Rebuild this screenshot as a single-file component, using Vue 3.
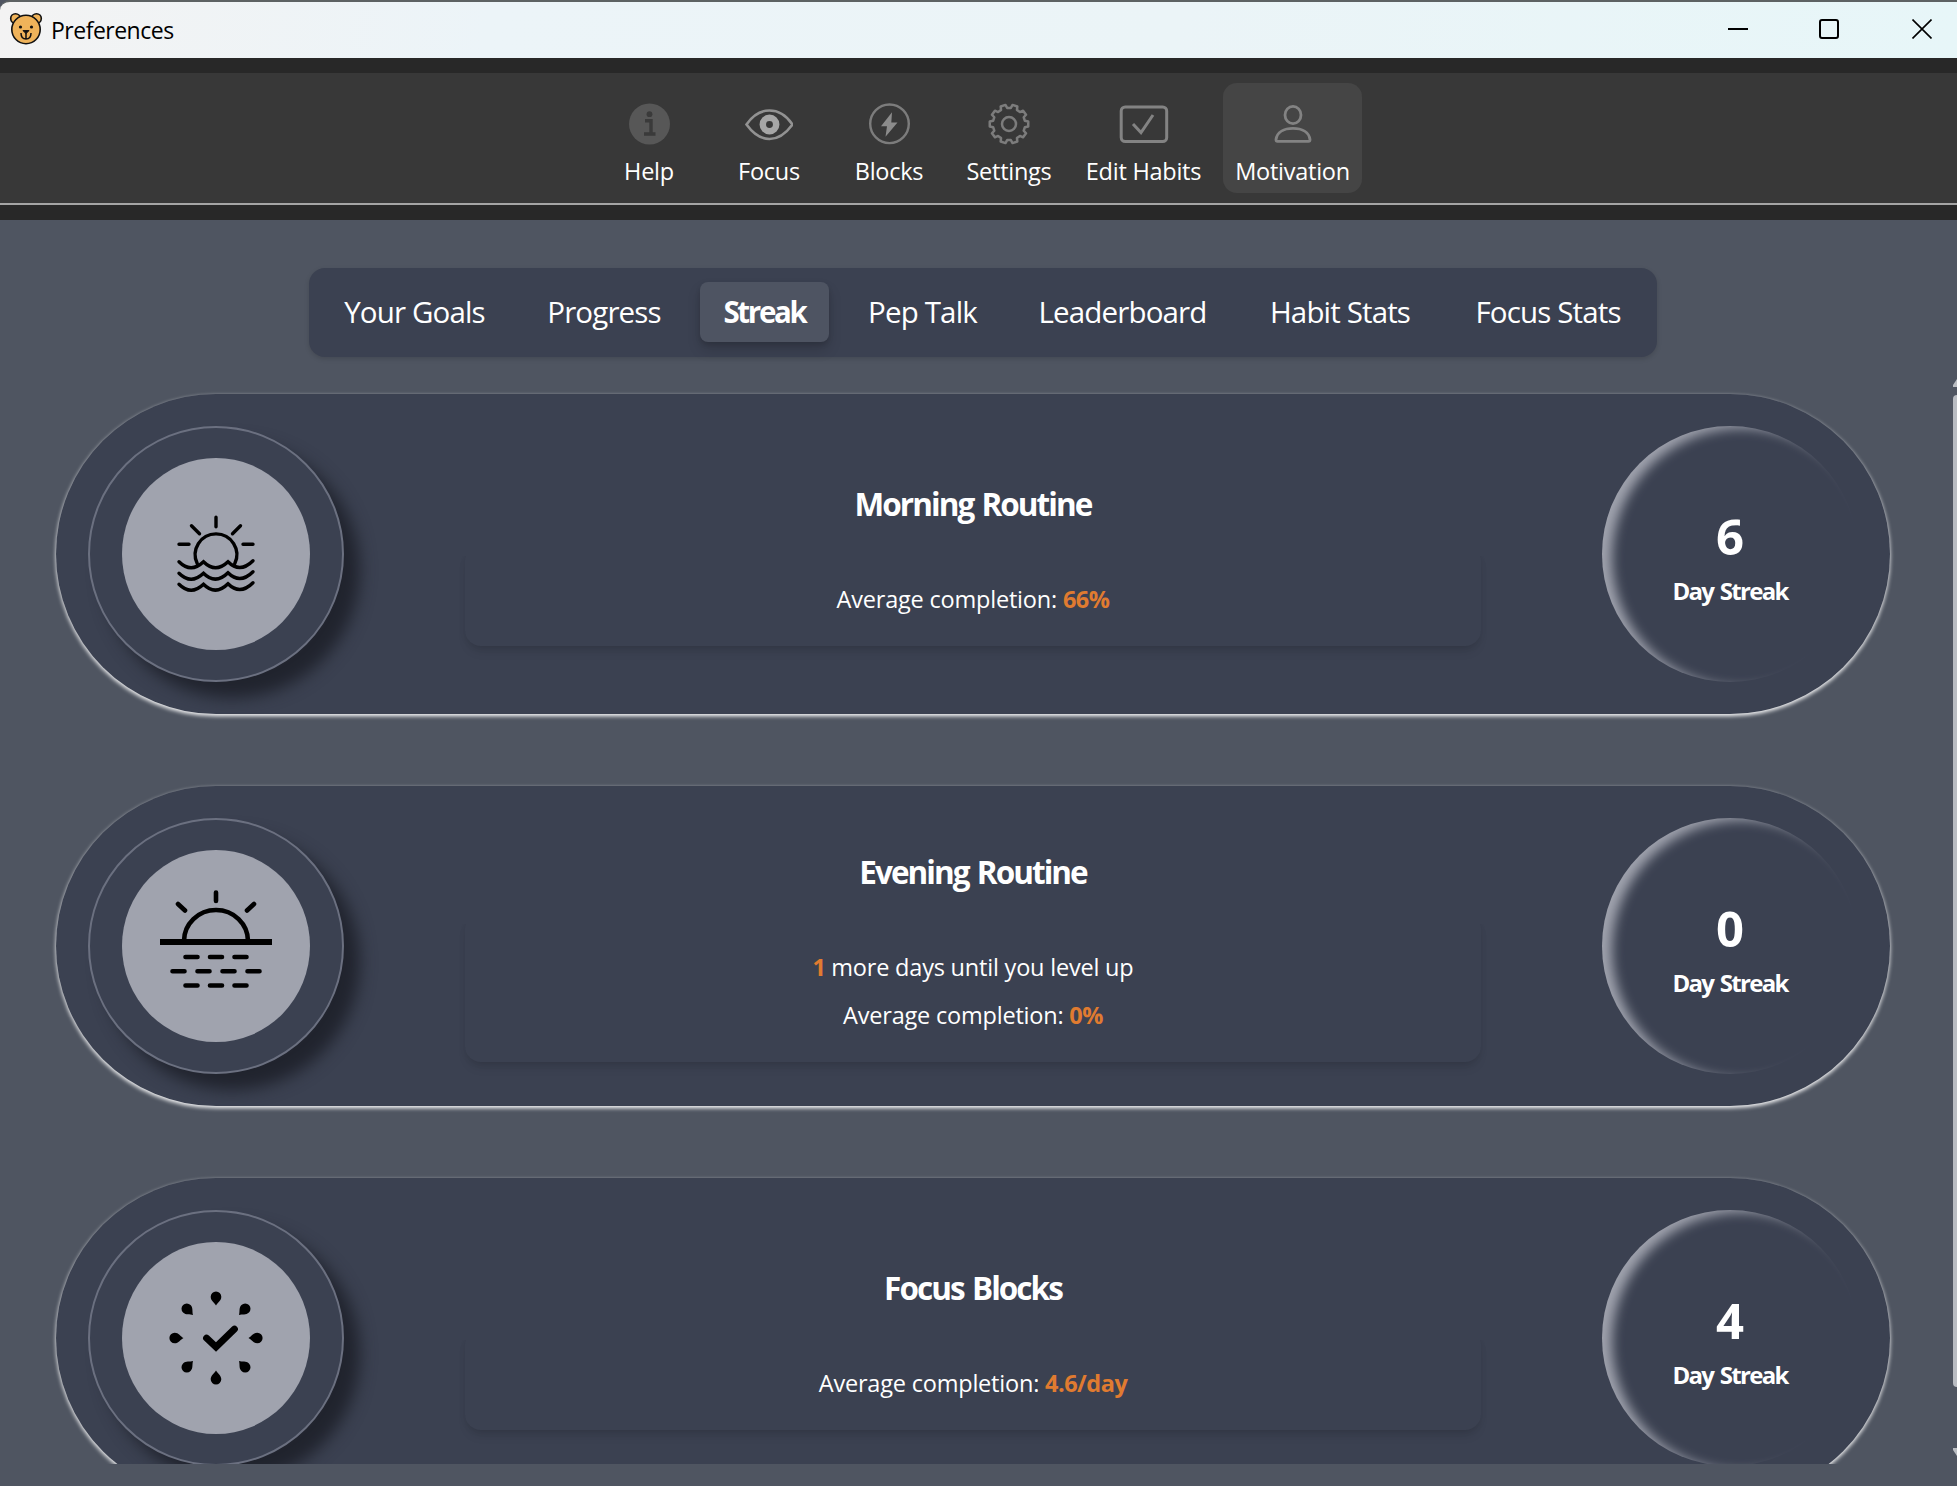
<script setup>
const tools = [
  { id: 'help', label: 'Help' },
  { id: 'focus', label: 'Focus' },
  { id: 'blocks', label: 'Blocks' },
  { id: 'settings', label: 'Settings' },
  { id: 'edit', label: 'Edit Habits', wide: true },
  { id: 'motivation', label: 'Motivation', wide: true, active: true },
]

const tabs = [
  { label: 'Your Goals', width: 187 },
  { label: 'Progress', width: 160 },
  { label: 'Streak', width: 129, active: true },
  { label: 'Pep Talk', width: 155 },
  { label: 'Leaderboard', width: 213 },
  { label: 'Habit Stats', width: 190 },
  { label: 'Focus Stats', width: 194 },
]

const streaks = [
  { id: 'morning', title: 'Morning Routine', average: '66%', days: 6 },
  { id: 'evening', title: 'Evening Routine', levelUp: 1, average: '0%', days: 0 },
  { id: 'blocks', title: 'Focus Blocks', average: '4.6/day', days: 4 },
]

const petals = [0, 45, 90, 135, 180, 225, 270, 315]

// Outline of the settings cog: alternating tooth tips and valleys.
const cog = (() => {
  const pts = []
  const teeth = 10
  for (let i = 0; i < teeth; i++) {
    const a = (i / teeth) * Math.PI * 2 - Math.PI / 2 + Math.PI / teeth
    for (const [off, r] of [[-0.2, 16.2], [-0.13, 19.4], [0.13, 19.4], [0.2, 16.2]]) {
      pts.push(`${(22 + r * Math.cos(a + off)).toFixed(2)} ${(22 + r * Math.sin(a + off)).toFixed(2)}`)
    }
  }
  return `M${pts.join('L')}Z`
})()
</script>

<template>
  <div class="window">
    <div class="titlebar">
      <svg class="bear" width="34" height="34" viewBox="0 0 34 34">
        <g fill="#efb35a" stroke="#111" stroke-width="1.6">
          <circle cx="6.5" cy="6.5" r="4.8" />
          <circle cx="27.5" cy="6.5" r="4.8" />
          <circle cx="17" cy="17.5" r="14.2" />
        </g>
        <circle cx="11.5" cy="15" r="1.6" fill="#111" />
        <circle cx="22.5" cy="15" r="1.6" fill="#111" />
        <path d="M14 18.6h6l-3 3z" fill="#111" stroke="#111" />
        <path d="M17 21v6M12 21c0 4 1.500 6 5 6s5-2 5-6" fill="none" stroke="#111" stroke-width="1.5" />
      </svg>
      <span class="caption">Preferences</span>
      <div class="controls">
        <svg width="20" height="20" viewBox="0 0 20 20"><path d="M0 10h20" /></svg>
        <svg width="20" height="20" viewBox="0 0 20 20"><rect x="1" y="1" width="18" height="18" rx="2" /></svg>
        <svg width="20" height="20" viewBox="0 0 20 20"><path d="M.5 .5l19 19M19.500 .5l-19 19" class="thin" /></svg>
      </div>
    </div>

    <nav class="toolbar">
      <div v-for="t in tools" :key="t.id" class="tool" :class="{ wide: t.wide, active: t.active }">
        <svg v-if="t.id === 'help'" width="48" height="44" viewBox="-2 0 48 44">
          <circle cx="22.500" cy="22" r="20.500" fill="#575757" />
          <circle cx="22.500" cy="12.200" r="2.900" fill="#3a3a3a" />
          <path d="M18 18.800h6v12.500M17 32h11.500" fill="none" stroke="#3a3a3a" stroke-width="3.400" />
        </svg>
        <svg v-else-if="t.id === 'focus'" width="48" height="44" viewBox="0 0 48 44">
          <path d="M1.500 22.500Q11 8.500 24.500 8.500T47.500 22.500Q37 37 24.500 37T1.500 22.500Z" fill="none" stroke="#929292" stroke-width="2.600" />
          <circle cx="24.500" cy="22.500" r="6.700" fill="none" stroke="#a6a6a6" stroke-width="6.500" />
        </svg>
        <svg v-else-if="t.id === 'blocks'" width="48" height="44" viewBox="0 0 48 44">
          <circle cx="24.500" cy="21.800" r="19.300" fill="none" stroke="#7c7c7c" stroke-width="2.400" />
          <path d="M27 10.300L16 24.300h6l-1.500 10.500L32.500 20.500h-6.200z" fill="#8c8c8c" />
        </svg>
        <svg v-else-if="t.id === 'settings'" width="48" height="44" viewBox="-2 0 48 44">
          <g fill="none" stroke="#7c7c7c" stroke-width="2.500" stroke-linejoin="round">
            <path :d="cog" />
            <circle cx="22" cy="22" r="7" />
          </g>
        </svg>
        <svg v-else-if="t.id === 'edit'" width="50" height="44" viewBox="0 0 50 44">
          <g fill="none" stroke="#838383" stroke-width="3">
            <rect x="2.200" y="5" width="45.500" height="34.500" rx="4" />
            <path d="M14 22l8 8.500 12-17.500" />
          </g>
        </svg>
        <svg v-else width="48" height="44" viewBox="0 0 48 44">
          <g fill="none" stroke="#838383" stroke-width="2.800" stroke-linejoin="round">
            <ellipse cx="24" cy="13" rx="8" ry="8.600" />
            <path d="M7 37.500C8 30 15 26.300 24 26.300s16 3.700 17 11.200c0 1-.5 1.800-1.500 1.800h-31c-1 0-1.500-.8-1.500-1.800z" />
          </g>
        </svg>
        <span>{{ t.label }}</span>
      </div>
    </nav>

    <main class="page">
      <div class="tabs">
        <div
          v-for="tab in tabs"
          :key="tab.label"
          class="tab"
          :class="{ active: tab.active }"
          :style="{ width: tab.width + 'px' }"
        >{{ tab.label }}</div>
      </div>

      <div class="scroller">
        <div class="list">
          <section v-for="s in streaks" :key="s.id" class="card">
            <div class="badge">
              <div class="disc">
                <svg v-if="s.id === 'morning'" width="120" height="120" viewBox="0 0.7 120 120">
                  <g fill="none" stroke="#000" stroke-width="3.400" stroke-linecap="round">
                    <path d="M60 24v9.500M35.500 32.500l8 8M84.500 32.500l-8 8M23 51h10M87 51h10" />
                    <path d="M41.300 70.500a20.800 20.800 0 1 1 37.400 0" />
                    <path d="M23 68.500q12 12 24.500 0q12 12 24.500 0q12 12 25-1" />
                    <path d="M23 80q12 12 24.500 0q12 12 24.500-.5q12 12 25-1" />
                    <path d="M23 91q12 12 24.500 0q12 12 24.500-.5q12 12 25-1" />
                  </g>
                </svg>
                <svg v-else-if="s.id === 'evening'" width="120" height="120" viewBox="0 0 120 120">
                  <g fill="none" stroke="#000" stroke-width="4.600" stroke-linecap="round">
                    <path d="M60 6.500v8.500M22 18l7 6.500M98 18l-7 6.500" />
                    <path d="M28 55a32 31 0 0 1 64 0" stroke-linecap="butt" />
                    <path d="M4 56h112" stroke-width="6" stroke-linecap="butt" />
                    <path d="M29.500 71h12M54 71h12M78.500 71h12M16.500 85.300h12M41.500 85.300h12M66.500 85.300h12M91.500 85.300h12M29.500 99.500h12M54 99.500h12M78.500 99.500h12" />
                  </g>
                </svg>
                <svg v-else width="120" height="120" viewBox="0 0 120 120">
                  <path
                    v-for="a in petals"
                    :key="a"
                    d="M60 27.500c-1.500-3-5.300-4.800-5.300-8.800a5.300 5.300 0 0 1 10.600 0c0 4-3.800 5.800-5.300 8.800z"
                    :transform="`rotate(${a} 60 60)`"
                  />
                  <path d="M50.500 60l9.500 9 18.500-18" fill="none" stroke="#000" stroke-width="6.800" stroke-linecap="round" />
                </svg>
              </div>
            </div>

            <div class="body">
              <h2>{{ s.title }}</h2>
              <div class="info">
                <p v-if="s.levelUp"><b>{{ s.levelUp }}</b> more days until you level up</p>
                <p>Average completion: <b>{{ s.average }}</b></p>
              </div>
            </div>

            <div class="streak">
              <strong>{{ s.days }}</strong>
              <span>Day Streak</span>
            </div>
          </section>
        </div>

        <div class="scrollbar">
          <svg width="4" height="8" viewBox="0 0 4 8"><path d="M0 8V6L4 0V8z" /></svg>
          <div class="thumb"></div>
          <svg width="4" height="8" viewBox="0 0 4 8"><path d="M0 0V2L4 8V0z" /></svg>
        </div>
      </div>
    </main>
  </div>
</template>

<style>
body {
  margin: 0;
  background: #4f5561;
}
</style>

<style scoped>
.window {
  width: 1957px;
  height: 1486px;
  overflow: hidden;
  display: flex;
  flex-direction: column;
  background: #4f5561;
  color: #fff;
  font-family: "Open Sans", "Noto Sans", sans-serif;
}
.titlebar {
  height: 58px;
  box-sizing: border-box;
  border-top: 2px solid #5d6263;
  flex: none;
  display: flex;
  align-items: center;
  padding: 0 25px 0 9px;
  background: linear-gradient(100deg, #f3f3f3, #ecf4f8 25%, #ebf4f7 60%, #e7f6f8);
  border-top-left-radius: 10px;
  color: #000;
}
.bear {
  margin-top: -3px;
}
.caption {
  margin-left: 8px;
  font-size: 23px;
  letter-spacing: -0.5px;
}
.controls {
  margin-left: auto;
  margin-top: -2px;
  display: flex;
}
.controls svg {
  margin-left: 73px;
  fill: none;
  stroke: #000;
  stroke-width: 2;
}
.controls svg:nth-child(2) {
  margin-left: 71px;
}
.controls .thin {
  stroke-width: 1.6;
}
.toolbar {
  flex: none;
  height: 162px;
  box-sizing: border-box;
  border-top: 15px solid #282828;
  border-bottom: 15px solid #282828;
  background: #383838;
  box-shadow: inset 0 -2px #a5a5a5;
  display: flex;
  gap: 12px;
  padding: 10px 0 0 595px;
}
.tool {
  width: 108px;
  height: 110px;
  box-sizing: border-box;
  padding-top: 19px;
  border-radius: 14px;
  display: flex;
  flex-direction: column;
  align-items: center;
  font-size: 23.5px;
  line-height: 32px;
  letter-spacing: -0.25px;
  white-space: nowrap;
}
.tool span {
  margin-top: 9px;
}
.tool.wide {
  width: 137px;
}
.tool.active {
  width: 139px;
  margin-left: -1px;
  background: #454545;
}
.page {
  flex: 1;
  min-height: 0;
  display: flex;
  flex-direction: column;
}
.tabs {
  width: 1348px;
  height: 89px;
  box-sizing: border-box;
  margin: 48px 0 0 309px;
  padding: 14px 12px 15px;
  display: flex;
  gap: 16px;
  border-radius: 16px;
  background: #3b4151;
  box-shadow: 0 2px 5px rgba(0, 0, 0, 0.14);
}
.tab {
  height: 60px;
  line-height: 60px;
  border-radius: 8px;
  text-align: center;
  white-space: nowrap;
  font-size: 29.5px;
  letter-spacing: -0.85px;
}
.tab.active {
  background: #4e5462;
  font-weight: 700;
  letter-spacing: -2.3px;
  box-shadow: 0 8px 14px rgba(0, 0, 0, 0.14), 0 3px 5px rgba(0, 0, 0, 0.12);
}
.scroller {
  height: 1094px;
  margin-top: 13px;
  flex: none;
  display: flex;
  overflow: hidden;
}
.list {
  width: 1834px;
  padding: 24px 63px 0 56px;
  display: flex;
  flex-direction: column;
  gap: 72px;
}
.card {
  flex: none;
  height: 320px;
  box-sizing: border-box;
  padding: 0 32px;
  border-radius: 160px;
  background: #3b4151;
  box-shadow: 0 2px 4px #fff;
  display: flex;
  align-items: center;
}
.badge {
  width: 256px;
  height: 256px;
  box-sizing: border-box;
  border: 2px solid #6b7080;
  border-radius: 50%;
  display: flex;
  align-items: center;
  justify-content: center;
  box-shadow: 16px 16px 16px #21242e;
  background: #3b4151;
}
.disc {
  width: 188px;
  height: 192px;
  border-radius: 50%;
  background: #a0a3ae;
  display: flex;
  align-items: center;
  justify-content: center;
}
.body {
  width: 1016px;
  margin: 0 121px 0 121px;
}
h2 {
  margin: 0;
  height: 84px;
  line-height: 83px;
  text-align: center;
  font-size: 31.5px;
  font-weight: 700;
  letter-spacing: -1.95px;
  word-spacing: 2px;
}
.info {
  padding: 29px 0 23px;
  border-radius: 16px;
  box-shadow: 0 8px 12px -4px rgba(0, 0, 0, 0.12), 0 2px 6px rgba(0, 0, 0, 0.06);
  clip-path: inset(10px -20px -20px -20px);
}
.info p {
  margin: 0;
  text-align: center;
  font-size: 23.5px;
  line-height: 48px;
  letter-spacing: -0.2px;
}
.info b {
  color: #e07b30;
  font-weight: 700;
  letter-spacing: -0.5px;
}
.streak {
  width: 256px;
  height: 256px;
  border-radius: 50%;
  box-shadow: inset 12px 4px 12px -2px #a0a3ae;
  display: flex;
  flex-direction: column;
  align-items: center;
  flex: none;
}
.streak strong {
  margin-top: 77px;
  font-size: 49px;
  line-height: 66px;
  font-weight: 700;
}
.streak span {
  margin-top: 5px;
  font-size: 24px;
  line-height: 34px;
  font-weight: 700;
  letter-spacing: -1.7px;
  word-spacing: 2px;
}
.scrollbar {
  width: 4px;
  padding-top: 9px;
  display: flex;
  flex-direction: column;
}
.scrollbar svg {
  display: block;
  fill: #babdc2;
}
.thumb {
  height: 992px;
  margin: 8px 0 61px;
  border-radius: 4px 0 0 4px;
  background: #b9bcc2;
}
</style>
